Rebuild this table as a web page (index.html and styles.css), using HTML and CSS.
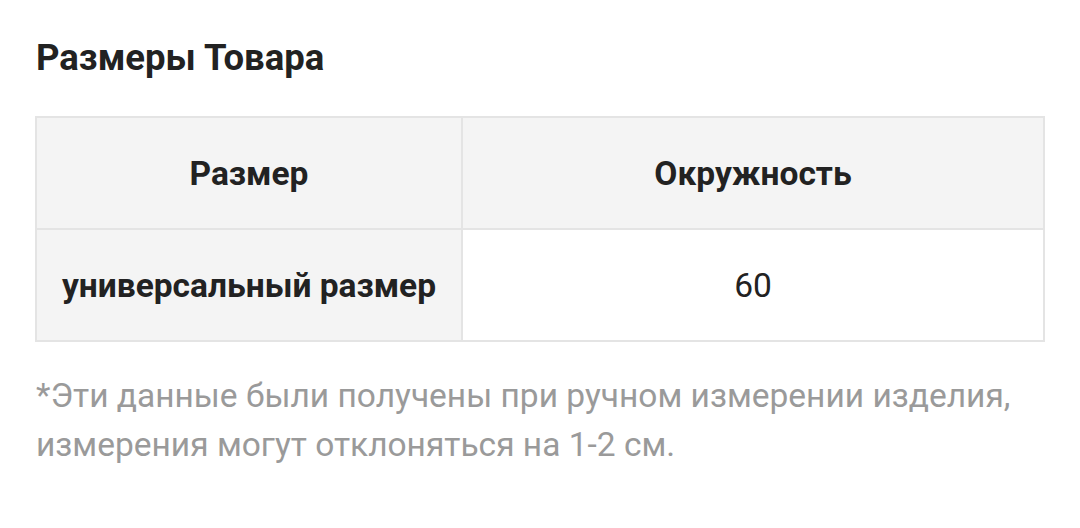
FILE: index.html
```html
<!DOCTYPE html>
<html lang="ru">
<head>
<meta charset="utf-8">
<link rel="stylesheet" href="styles.css">
</head>
<body>
<section class="sizes">
  <h2 class="sizes-title">Размеры Товара</h2>
  <table class="sizes-table">
    <thead>
      <tr>
        <th class="col-size">Размер</th>
        <th>Окружность</th>
      </tr>
    </thead>
    <tbody>
      <tr>
        <th class="row-head">универсальный размер</th>
        <td>60</td>
      </tr>
    </tbody>
  </table>
  <p class="sizes-note">*Эти данные были получены при ручном измерении изделия, измерения могут отклоняться на 1-2 см.</p>
</section>
</body>
</html>
```
FILE: styles.css
```css
html, body {
  margin: 0;
  padding: 0;
  background: #ffffff;
}
body {
  font-family: Roboto, "Noto Sans", sans-serif;
  color: #222222;
}
.sizes {
  padding: 34px 35px 0 35px;
}
.sizes-title {
  margin: 0 0 0 1px;
  font-size: 36.5px;
  font-weight: 700;
  line-height: 48px;
  color: #222222;
}
.sizes-table {
  margin-top: 34px;
  width: 100%;
  border-collapse: collapse;
  table-layout: fixed;
}
.sizes-table th,
.sizes-table td {
  border: 2px solid #e4e4e4;
  height: 110px;
  padding: 0 10px;
  text-align: center;
  font-size: 33.5px;
  color: #222222;
}
.sizes-table th {
  font-weight: 700;
  background: #f4f4f4;
}
.sizes-table td {
  font-weight: 400;
  background: #ffffff;
}
.col-size {
  width: 404px;
}
.sizes-note {
  margin: 29px 0 0 1px;
  font-size: 33.5px;
  line-height: 49px;
  color: #9a9a9a;
}
```
